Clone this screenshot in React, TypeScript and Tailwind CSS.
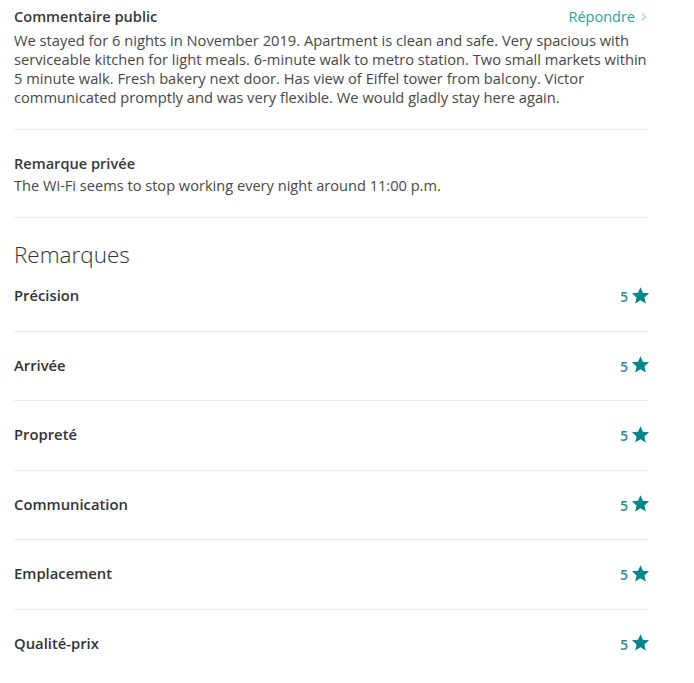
import React from "react";

const Star = () => (
  <svg width="19" height="19" viewBox="0 0 24 24" className="ml-[3px]">
    <path
      d="M12 1.5l3.1 7.1 7.7.7-5.8 5.1 1.7 7.6L12 18l-6.7 4 1.7-7.6-5.8-5.1 7.7-.7z"
      fill="#00858a"
    />
  </svg>
);

const rows = ["Précision", "Arrivée", "Propreté", "Communication", "Emplacement", "Qualité-prix"];

export default function App() {
  return (
    <div className="bg-white w-[694px] h-[683px] overflow-hidden" style={{ fontFamily: "'Open Sans', sans-serif" }}>
      <div className="ml-[14px] w-[634px]">
        <div className="pt-[7px] pb-[22px] border-b border-[#ebebeb]">
          <div className="flex items-center justify-between h-[20px]">
            <div className="text-[14.6px] font-semibold text-[#383838]">Commentaire public</div>
            <div className="flex items-center text-[14.5px] text-[#2e9ea3]">
              Répondre
              <svg width="8" height="10" viewBox="0 0 8 10" className="ml-[5px]">
                <path d="M2 1.5l3.5 3.5L2 8.5" stroke="#9ed2d4" strokeWidth="1.2" fill="none" />
              </svg>
            </div>
          </div>
          <p className="mt-[4px] mr-[-4px] text-[14.7px] leading-[19px] text-[#484848]">
            We stayed for 6 nights in November 2019. Apartment is clean and safe. Very spacious with serviceable kitchen for light meals. 6-minute walk to metro station. Two small markets within 5 minute walk. Fresh bakery next door. Has view of Eiffel tower from balcony. Victor communicated promptly and was very flexible. We would gladly stay here again.
          </p>
        </div>
        <div className="pt-[23px] pb-[22px] border-b border-[#ebebeb]">
          <div className="text-[14.6px] font-semibold text-[#383838] leading-[20px]">Remarque privée</div>
          <p className="mt-[3px] text-[14.6px] leading-[19px] text-[#484848]">
            The Wi-Fi seems to stop working every night around 11:00 p.m.
          </p>
        </div>
        <div className="pt-[22px] text-[22.5px] font-light text-[#333] leading-[30px]">Remarques</div>
        <div>
          {rows.map((r, i) => (
            <div
              key={r}
              className={`flex items-center justify-between ${i === 0 ? "pt-[15px]" : "pt-[23px]"} pb-[25.5px] ${i < rows.length - 1 ? "border-b border-[#ebebeb]" : ""}`}
            >
              <div className="text-[14.8px] font-semibold text-[#333] leading-[20px]">{r}</div>
              <div className="flex items-center h-[20px] mr-[-2px]">
                <span className="text-[13.5px] font-semibold text-[#1e8b90] leading-[20px] mt-[4px]">5</span>
                <Star />
              </div>
            </div>
          ))}
        </div>
      </div>
    </div>
  );
}
